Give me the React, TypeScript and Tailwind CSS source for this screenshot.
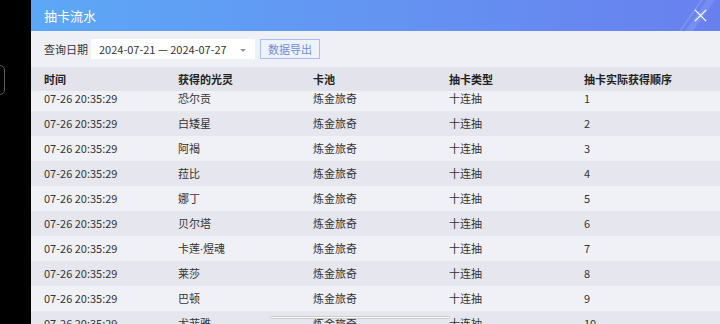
import React from "react"

const rows = [
  ["恐尔贡", "1"],
  ["白矮星", "2"],
  ["阿褐", "3"],
  ["菈比", "4"],
  ["娜丁", "5"],
  ["贝尔塔", "6"],
  ["卡莲·煜魂", "7"],
  ["莱莎", "8"],
  ["巴顿", "9"],
  ["尤菲雅", "10"],
]

const cols = "grid grid-cols-[134px_135px_136px_135px_1fr] pl-[13px]"

function Name({ text }: { text: string }) {
  const parts = text.split("·")
  if (parts.length < 2) return <span>{text}</span>
  return (
    <span>
      {parts[0]}
      <span style={{ fontFamily: '"Noto Sans", sans-serif' }}>·</span>
      {parts[1]}
    </span>
  )
}

export default function App() {
  return (
    <div
      className="relative flex h-[324px] w-[720px] overflow-hidden bg-black text-[11px] text-[#333]"
      style={{ fontFamily: '"Noto Sans CJK SC", "Noto Sans", sans-serif' }}
    >
      {/* 左侧黑边 + 摄像头 */}
      <div className="flex w-[31px] shrink-0 flex-col">
        <div className="ml-[-6px] mt-[65px] h-[30px] w-[11px] rounded-[5px] border border-[#5a5a5a]" />
      </div>

      <div className="flex flex-1 flex-col bg-[#eff0f6]">
        {/* 标题栏 */}
        <header className="relative flex h-[31px] shrink-0 items-center overflow-hidden bg-gradient-to-r from-[#5ca8f6] to-[#6880ee] pl-[13px]">
          <span className="text-[13px] text-white">抽卡流水</span>
          <div className="absolute right-[16px] top-0 h-full w-[8px] skew-x-[-35deg] bg-white/10" />
          <div className="absolute right-[28px] top-0 h-full w-[2px] skew-x-[-35deg] bg-white/15" />
          <button className="ml-auto mr-[12px] flex h-[15px] w-[15px] items-center justify-center text-white">
            <svg viewBox="0 0 16 16" className="h-[15px] w-[15px]" fill="none" stroke="currentColor" strokeWidth="1.4">
              <path d="M2 2L14 14M14 2L2 14" />
            </svg>
          </button>
        </header>

        {/* 筛选 */}
        <div className="flex h-[36px] shrink-0 items-center pl-[13px]">
          <span className="mr-[3px] whitespace-nowrap">查询日期</span>
          <div className="mr-[5px] flex h-[20px] w-[164px] items-center bg-white pl-[8px] pr-[9px]">
            <span className="whitespace-nowrap">2024-07-21 — 2024-07-27</span>
            <span className="ml-auto mt-[2px] h-0 w-0 border-x-[3.5px] border-t-[3.5px] border-x-transparent border-t-[#999]" />
          </div>
          <button className="flex h-[20px] w-[60px] items-center justify-center border border-[#a9bff0] bg-[#eef2fc] text-[#6f8ed8]">
            数据导出
          </button>
        </div>

        {/* 表格 */}
        <div className={`${cols} h-[24px] shrink-0 items-center bg-[#e3e4eb] font-bold text-[#222]`}>
          <span>时间</span>
          <span>获得的光灵</span>
          <span>卡池</span>
          <span>抽卡类型</span>
          <span>抽卡实际获得顺序</span>
        </div>
        <div className="flex-1 overflow-hidden">
          <div className="-mt-[5px]">
            {rows.map(([name, n], i) => (
              <div
                key={n}
                className={`${cols} h-[25px] items-center ${i % 2 ? "bg-[#e6e7ee]" : "bg-[#f0f1f7]"}`}
              >
                <span>07-26 20:35:29</span>
                <Name text={name} />
                <span>炼金旅奇</span>
                <span>十连抽</span>
                <span>{n}</span>
              </div>
            ))}
          </div>
        </div>
      </div>

      {/* 底部横条 */}
      <div className="absolute bottom-[5px] left-[270px] h-[3px] w-[180px] rounded-full border border-[#c8c8c8] bg-white" />
    </div>
  )
}
